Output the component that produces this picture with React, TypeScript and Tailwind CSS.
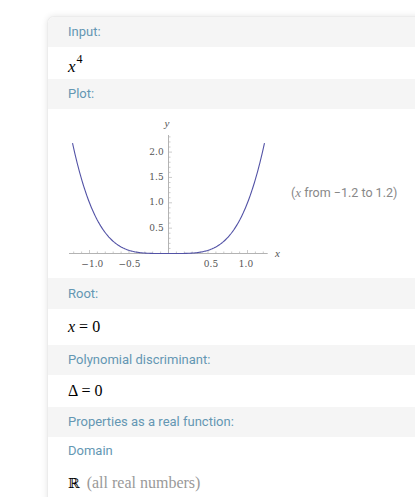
import React from "react";

const AX = 120.5;
const AY = 144.5;
const UX = 79;
const UY = 50.7;

function curvePath() {
  const pts: string[] = [];
  for (let i = 0; i <= 243; i++) {
    const x = -1.215 + i * 0.01;
    const px = AX + x * UX;
    const py = AY - Math.pow(x, 4) * UY;
    pts.push(`${i === 0 ? "M" : "L"}${px.toFixed(2)},${py.toFixed(2)}`);
  }
  return pts.join(" ");
}

function Plot() {
  const xTicks: React.ReactNode[] = [];
  for (let k = -12; k <= 12; k++) {
    if (k === 0) continue;
    const px = AX + (k / 10) * UX;
    const major = k % 5 === 0;
    xTicks.push(
      <line key={"x" + k} x1={px} x2={px} y1={AY} y2={AY - (major ? 3.5 : 2)} stroke="#b4b4b4" strokeWidth={0.7} />
    );
  }
  const yTicks: React.ReactNode[] = [];
  for (let k = 1; k <= 23; k++) {
    const py = AY - (k / 10) * UY;
    const major = k % 5 === 0;
    yTicks.push(
      <line key={"y" + k} x1={AX} x2={AX + (major ? 3.5 : 2)} y1={py} y2={py} stroke="#b4b4b4" strokeWidth={0.7} />
    );
  }
  const tick = { fontFamily: '"DejaVu Serif", "Liberation Serif", serif' };
  const serif = { fontFamily: '"Liberation Serif", "DejaVu Serif", serif' };
  return (
    <svg width={240} height={169} viewBox="0 0 240 169" className="shrink-0">
      <line x1={21} x2={219.7} y1={AY} y2={AY} stroke="#a0a0a0" strokeWidth={0.8} />
      <line x1={AX} x2={AX} y1={26} y2={AY} stroke="#a0a0a0" strokeWidth={0.8} />
      {xTicks}
      {yTicks}
      <path d={curvePath()} fill="none" stroke="#5353a6" strokeWidth={1.1} />
      <g style={tick} fontSize={9} fill="#555">
        <text x={44.3} y={157.5} textAnchor="middle">−1.0</text>
        <text x={81.5} y={157.5} textAnchor="middle">−0.5</text>
        <text x={163} y={157.5} textAnchor="middle">0.5</text>
        <text x={198} y={157.5} textAnchor="middle">1.0</text>
        <text x={115.7} y={45.8} textAnchor="end">2.0</text>
        <text x={115.7} y={71} textAnchor="end">1.5</text>
        <text x={115.7} y={96.4} textAnchor="end">1.0</text>
        <text x={115.7} y={121.8} textAnchor="end">0.5</text>
      </g>
      <g style={serif} fill="#555">
        <text x={119} y={18} textAnchor="middle" fontStyle="italic" fontSize={11}>y</text>
        <text x={229.5} y={147.5} textAnchor="middle" fontStyle="italic" fontSize={11}>x</text>
      </g>
    </svg>
  );
}

function Header({ children, h }: { children: React.ReactNode; h: string }) {
  return (
    <div className={`${h} bg-[#f5f5f5] flex items-center pl-[20px] text-[13px] text-[#6497b3]`}>
      {children}
    </div>
  );
}

export default function App() {
  const serif = { fontFamily: '"Liberation Serif", "DejaVu Serif", serif' };
  return (
    <div
      className="w-[415px] h-[497px] overflow-hidden bg-white pt-[16px] pl-[47px]"
      style={{ fontFamily: 'Roboto, "Liberation Sans", sans-serif' }}
    >
      <div className="w-[400px] h-[520px] bg-white rounded-tl-[7px] border-t border-l border-[#ececec] shadow-[0_0_6px_rgba(0,0,0,0.10)] overflow-hidden">
        <Header h="h-[30px]">Input:</Header>
        <div className="h-[32px] flex items-center pl-[20px]">
          <span className="text-[17px] text-black leading-none relative top-[3px]" style={serif}>
            <i>x</i>
            <span className="text-[12px] relative -top-[9px] ml-[1px]">4</span>
          </span>
        </div>
        <Header h="h-[30px]">Plot:</Header>
        <div className="h-[169px] flex">
          <Plot />
          <div className="pt-[74px] pl-[3px] text-[12.5px] text-[#888888] whitespace-nowrap">
            (<i style={serif} className="text-[13px]">x</i> from −1.2 to 1.2)
          </div>
        </div>
        <Header h="h-[31px]">Root:</Header>
        <div className="h-[36px] flex items-center pl-[20px]">
          <span className="text-[16px] text-black" style={serif}>
            <i>x</i> = 0
          </span>
        </div>
        <Header h="h-[30px]">Polynomial discriminant:</Header>
        <div className="h-[32px] flex items-center pl-[20px]">
          <span className="text-[16px] text-black" style={serif}>
            Δ = 0
          </span>
        </div>
        <Header h="h-[30px]">Properties as a real function:</Header>
        <div className="h-[28px] flex items-center pl-[20px] text-[13px] text-[#6497b3]">Domain</div>
        <div className="h-[36px] flex items-center pl-[20px]">
          <span className="text-[14px] text-black" style={{ fontFamily: '"DejaVu Serif", serif' }}>ℝ</span>
          <span className="text-[16px] text-[#999999] ml-[7px]" style={serif}>
            (all real numbers)
          </span>
        </div>
      </div>
    </div>
  );
}
